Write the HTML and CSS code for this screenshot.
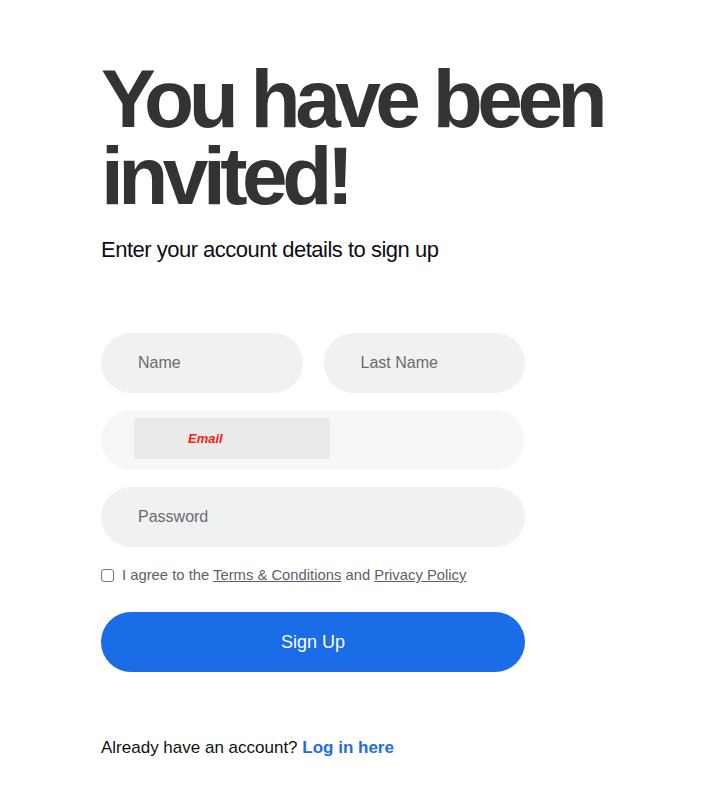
FILE: index.html
```html
<!DOCTYPE html>
<html lang="en">
<head>
    <meta charset="UTF-8">
    <meta name="viewport" content="width=device-width, initial-scale=1.0">
    <title>Sign up</title>
    <link rel="stylesheet" href="styles.css">
</head>
<body>
    <div class="page">
        <h1>You have been invited!</h1>
        <p class="subtitle">Enter your account details to sign up</p>

        <form class="form">
            <div class="row">
                <input type="text" class="field" placeholder="Name">
                <input type="text" class="field" placeholder="Last Name">
            </div>
            <div class="field field-email">
                <span class="email-img">Email</span>
            </div>
            <input type="password" class="field" placeholder="Password">

            <label class="agree">
                <input type="checkbox" class="check">
                <span>I agree to the <a href="#">Terms &amp; Conditions</a> and <a href="#">Privacy Policy</a></span>
            </label>

            <button type="button" class="btn">Sign Up</button>
        </form>

        <p class="login">Already have an account? <a href="#">Log in here</a></p>
    </div>
</body>
</html>
```

FILE: styles.css
```css
body { margin: 0; background: #fff; font-family: "Liberation Sans", Arial, sans-serif; color: #111; }
.page { padding: 60px 0 0 101px; width: 540px; }
h1 { margin: 0; font-size: 82px; line-height: 77px; font-weight: 700; letter-spacing: -5.5px; color: #333; }
.subtitle { margin: 23px 0 0; font-size: 22px; line-height: 26px; letter-spacing: -0.5px; color: #0d0d17; }

.form { width: 424px; margin-top: 70px; display: flex; flex-direction: column; gap: 17px; }
.row { display: flex; gap: 21px; }
.field { box-sizing: border-box; width: 100%; height: 60px; padding: 0 37px; border: none; border-radius: 30px; background: #f0f1f3; font-family: inherit; font-size: 16px; color: #333; outline: none; }
.field::placeholder { color: #6b6b6b; }
.field-email { background: #f6f7f9; padding: 8px 0 0 33px; }
.email-img { display: block; box-sizing: border-box; width: 196px; height: 41px; padding: 13px 0 0 54px; background: #eaeaea; color: #ff1a0a; font-size: 13px; font-weight: 700; font-style: italic; line-height: 16px; }

.agree { display: flex; align-items: center; gap: 8px; height: 20px; margin-top: 1px; font-size: 14.8px; color: #5f5f66; }
.agree a { color: #5f5f66; }
.check { appearance: none; margin: 0; width: 13px; height: 13px; border: 1px solid #777; border-radius: 3px; background: #fff; }

.btn { height: 60px; margin-top: 10px; border: none; border-radius: 30px; background: #1a6de6; color: #fff; font-family: inherit; font-size: 18px; cursor: pointer; }

.login { margin: 66px 0 0; font-size: 17px; line-height: 20px; color: #111; }
.login a { color: #1a6de6; font-weight: 700; text-decoration: none; }
```
